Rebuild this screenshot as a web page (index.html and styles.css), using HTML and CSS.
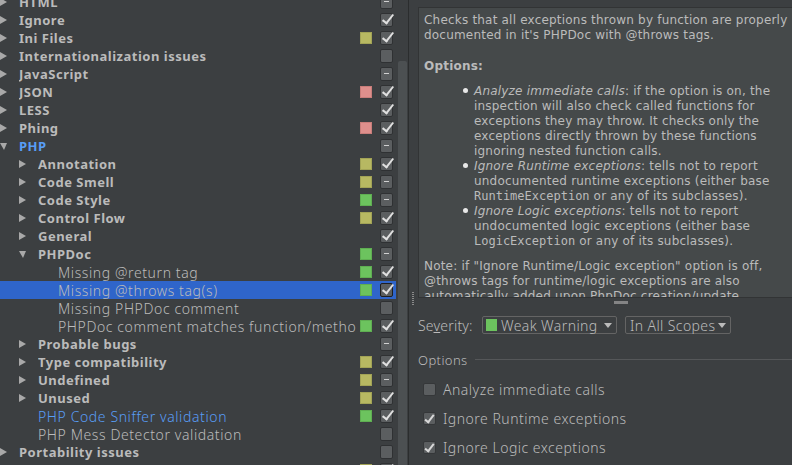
FILE: index.html
```html
<!DOCTYPE html>
<html>
<head>
<meta charset="utf-8">
<link rel="stylesheet" href="styles.css">
</head>
<body>
<div class="app">
  <div class="tree-pane">
    <div class="tree">
      <div class="row l0"><span class="arr right"></span><span class="lbl b">HTML</span><span class="sw"></span><span class="cb minus"></span></div>
      <div class="row l0"><span class="arr right"></span><span class="lbl b">Ignore</span><span class="sw"></span><span class="cb on"></span></div>
      <div class="row l0"><span class="arr right"></span><span class="lbl b">Ini Files</span><span class="sw y"></span><span class="cb on"></span></div>
      <div class="row l0"><span class="arr right"></span><span class="lbl b">Internationalization issues</span><span class="sw"></span><span class="cb"></span></div>
      <div class="row l0"><span class="arr right"></span><span class="lbl b">JavaScript</span><span class="sw"></span><span class="cb minus"></span></div>
      <div class="row l0"><span class="arr right"></span><span class="lbl b">JSON</span><span class="sw r"></span><span class="cb on"></span></div>
      <div class="row l0"><span class="arr right"></span><span class="lbl b">LESS</span><span class="sw"></span><span class="cb on"></span></div>
      <div class="row l0"><span class="arr right"></span><span class="lbl b">Phing</span><span class="sw r"></span><span class="cb on"></span></div>
      <div class="row l0"><span class="arr down"></span><span class="lbl b blue">PHP</span><span class="sw"></span><span class="cb minus"></span></div>
      <div class="row l1"><span class="arr right"></span><span class="lbl b">Annotation</span><span class="sw y"></span><span class="cb on"></span></div>
      <div class="row l1"><span class="arr right"></span><span class="lbl b">Code Smell</span><span class="sw y"></span><span class="cb minus"></span></div>
      <div class="row l1"><span class="arr right"></span><span class="lbl b">Code Style</span><span class="sw g"></span><span class="cb minus"></span></div>
      <div class="row l1"><span class="arr right"></span><span class="lbl b">Control Flow</span><span class="sw y"></span><span class="cb on"></span></div>
      <div class="row l1"><span class="arr right"></span><span class="lbl b">General</span><span class="sw"></span><span class="cb on"></span></div>
      <div class="row l1"><span class="arr down"></span><span class="lbl b">PHPDoc</span><span class="sw g"></span><span class="cb minus"></span></div>
      <div class="row l2"><span class="lbl">Missing @return tag</span><span class="sw g"></span><span class="cb on"></span></div>
      <div class="row l2 sel"><span class="lbl">Missing @throws tag(s)</span><span class="sw g"></span><span class="cb on"></span></div>
      <div class="row l2"><span class="lbl">Missing PHPDoc comment</span><span class="sw"></span><span class="cb"></span></div>
      <div class="row l2"><span class="lbl">PHPDoc comment matches function/method signature</span><span class="sw g"></span><span class="cb on"></span></div>
      <div class="row l1"><span class="arr right"></span><span class="lbl b">Probable bugs</span><span class="sw"></span><span class="cb minus"></span></div>
      <div class="row l1"><span class="arr right"></span><span class="lbl b">Type compatibility</span><span class="sw y"></span><span class="cb on"></span></div>
      <div class="row l1"><span class="arr right"></span><span class="lbl b">Undefined</span><span class="sw y"></span><span class="cb minus"></span></div>
      <div class="row l1"><span class="arr right"></span><span class="lbl b">Unused</span><span class="sw y"></span><span class="cb on"></span></div>
      <div class="row l1 leaf"><span class="lbl blue">PHP Code Sniffer validation</span><span class="sw g"></span><span class="cb on"></span></div>
      <div class="row l1 leaf"><span class="lbl">PHP Mess Detector validation</span><span class="sw"></span><span class="cb"></span></div>
      <div class="row l0"><span class="arr right"></span><span class="lbl b">Portability issues</span><span class="sw"></span><span class="cb"></span></div>
      <div class="row l0"><span class="arr right"></span><span class="lbl b">Properties Files</span><span class="sw y"></span><span class="cb on"></span></div>
    </div>
  </div>
  <div class="scroll"><div class="thumb"></div></div>
  <div class="divider"></div>
  <div class="right-pane">
    <div class="vgrip"></div>
    <div class="desc">
      <p class="p1">Checks that all exceptions thrown by function are properly<br>documented in it's PHPDoc with @throws tags.</p>
      <p class="opt-h">Options:</p>
      <ul class="list">
        <li><i>Analyze immediate calls</i>: if the option is on, the<br>inspection will also check called functions for<br>exceptions they may throw. It checks only the<br>exceptions directly thrown by these functions<br>ignoring nested function calls.</li>
        <li><i>Ignore Runtime exceptions</i>: tells not to report<br>undocumented runtime exceptions (either base<br><span class="mono">RuntimeException</span> or any of its subclasses).</li>
        <li><i>Ignore Logic exceptions</i>: tells not to report<br>undocumented logic exceptions (either base<br><span class="mono">LogicException</span> or any of its subclasses).</li>
      </ul>
      <p class="note">Note: if "Ignore Runtime/Logic exception" option is off,<br>@throws tags for runtime/logic exceptions are also<br>automatically added upon PhpDoc creation/update.</p>
    </div>
    <div class="splitter"><span class="hgrip"></span></div>
    <div class="sev-row">
      <span class="sev-lbl">Se<u>v</u>erity:</span>
      <div class="combo c1"><span class="gsq"></span><span class="ctext">Weak Warning</span><span class="carr"></span></div>
      <div class="combo c2"><span class="ctext">In All Scopes</span><span class="carr"></span></div>
    </div>
    <div class="opts-head"><span>Options</span><span class="line"></span></div>
    <div class="opt"><span class="ocb"></span><span>Analyze immediate calls</span></div>
    <div class="opt"><span class="ocb on"></span><span>Ignore Runtime exceptions</span></div>
    <div class="opt"><span class="ocb on"></span><span>Ignore Logic exceptions</span></div>
  </div>
</div>
</body>
</html>
```
FILE: styles.css
```css
html, body {
  margin: 0;
  padding: 0;
  background: #3c3f41;
}
body {
  width: 792px;
  height: 465px;
  overflow: hidden;
  font-family: "Noto Sans", "DejaVu Sans", sans-serif;
  color: #bbbbbb;
}
.app {
  display: flex;
  height: 465px;
}
.tree-pane {
  width: 396px;
  flex: none;
  overflow: hidden;
}
.tree {
  margin-top: -7px;
}
.row {
  height: 18px;
  display: flex;
  align-items: center;
  padding-right: 3px;
  font-size: 13px;
}
.row.sel {
  background: #2f65ca;
}
.row.l0 { padding-left: 0; }
.row.l1 { padding-left: 19px; }
.row.l1.leaf { padding-left: 38px; }
.row.l2 { padding-left: 58px; }
.arr {
  width: 7px;
  height: 8px;
  flex: none;
  margin-right: 12px;
}
.arr.right::before {
  content: "";
  display: block;
  width: 0;
  height: 0;
  border-top: 4px solid transparent;
  border-bottom: 4px solid transparent;
  border-left: 7px solid #a9a9a9;
}
.arr.down::before {
  content: "";
  display: block;
  width: 0;
  height: 0;
  margin-top: 1px;
  border-left: 4px solid transparent;
  border-right: 3px solid transparent;
  border-top: 7px solid #a9a9a9;
}
.lbl {
  flex: 1;
  min-width: 0;
  white-space: nowrap;
  overflow: hidden;
  font-size: 14px;
  font-weight: 300;
  color: #bbbbbb;
  letter-spacing: 0.6px;
}
.lbl.b {
  font-size: 13px;
  font-weight: 700;
  color: #bbbbbb;
  letter-spacing: 0.5px;
}
.blue, .lbl.blue, .lbl.b.blue {
  color: #589df6;
}
.sw {
  width: 12px;
  height: 12px;
  flex: none;
  margin: 0 8px 0 4px;
  box-sizing: border-box;
}
.sw.y { background: #b7b862; border: 1px solid #a2a356; }
.sw.r { background: #de8f8c; border: 1px solid #c87d7a; }
.sw.g { background: #6cc35e; border: 1px solid #5fae52; }
.cb {
  width: 13px;
  height: 14px;
  flex: none;
  box-sizing: border-box;
  background: #5b5e60;
  border: 1px solid #2f3133;
  border-radius: 2px;
  position: relative;
}
.cb.minus::after {
  content: "";
  position: absolute;
  left: 3px;
  right: 3px;
  top: 5px;
  height: 1px;
  background: #d0d0d0;
}
.cb.on::after {
  content: "";
  position: absolute;
  left: 4px;
  top: -2px;
  width: 4px;
  height: 10px;
  border-right: 2px solid #e0e0e0;
  border-bottom: 2px solid #e0e0e0;
  transform: rotate(38deg);
  transform-origin: 50% 50%;
}
.sel .cb {
  border-color: #1f1f1f;
}
.scroll {
  width: 12px;
  flex: none;
  padding-top: 61px;
  box-sizing: border-box;
}
.thumb {
  width: 9px;
  margin-left: 2px;
  height: 420px;
  background: #4c5052;
  border-radius: 2px 2px 0 0;
}
.divider {
  width: 1px;
  flex: none;
  background: #2b2d2e;
}
.right-pane {
  flex: 1;
  min-width: 0;
  padding-left: 9px;
  position: relative;
  overflow: hidden;
}
.vgrip {
  position: absolute;
  left: 3px;
  top: 292px;
  width: 2px;
  height: 14px;
  background-image: linear-gradient(#8a8a8a 1px, transparent 1px);
  background-size: 2px 2px;
}
.desc {
  margin-top: 7px;
  height: 291px;
  margin-right: -2px;
  box-sizing: border-box;
  border: 1px solid #323435;
  background: #45494a;
  overflow: hidden;
  padding: 5px 0 0 5px;
  font-family: "DejaVu Sans", sans-serif;
  font-size: 12px;
  line-height: 15px;
  letter-spacing: 0.2px;
  color: #bbbbbb;
  white-space: nowrap;
}
.desc p {
  margin: 0;
}
.opt-h {
  margin-top: 16px !important;
  font-weight: bold;
}
.list {
  list-style: none;
  margin: 10px 0 0 0;
  padding: 0 0 0 50px;
}
.list li::before {
  content: "";
  display: inline-block;
  width: 5px;
  height: 5px;
  border-radius: 50%;
  background: #e8e8e8;
  margin-left: -11px;
  margin-right: 6px;
  vertical-align: 2px;
}
.mono {
  font-family: "DejaVu Sans Mono", monospace;
  font-size: 12px;
  letter-spacing: 0;
}
.note {
  margin-top: 10px !important;
}
.splitter {
  height: 18px;
  display: flex;
  padding: 3px 0 0 196px;
  box-sizing: border-box;
}
.hgrip {
  width: 14px;
  height: 3px;
  background-image: radial-gradient(circle, #8a8a8a 0.7px, transparent 0.8px);
  background-size: 2px 2px;
}
.sev-row {
  display: flex;
  align-items: center;
  height: 18px;
  font-size: 14px;
  font-weight: 300;
  letter-spacing: 0.4px;
}
.sev-lbl {
  width: 64px;
  flex: none;
  white-space: nowrap;
  letter-spacing: 0.2px;
}
.combo {
  height: 18px;
  box-sizing: border-box;
  border: 1px solid #646464;
  border-radius: 2px;
  display: flex;
  align-items: center;
  padding: 0 4px 0 3px;
  flex: none;
}
.c1 {
  width: 135px;
}
.c2 {
  width: 106px;
  margin-left: 8px;
  padding-left: 4px;
}
.gsq {
  width: 11px;
  height: 12px;
  background: #6cc35e;
  margin-right: 4px;
  flex: none;
}
.ctext {
  flex: 1;
  white-space: nowrap;
}
.carr {
  width: 0;
  height: 0;
  flex: none;
  border-left: 4px solid transparent;
  border-right: 4px solid transparent;
  border-top: 5px solid #bbbbbb;
}
.opts-head {
  display: flex;
  align-items: center;
  margin-top: 18px;
  height: 16px;
  font-size: 13px;
  font-weight: 300;
  letter-spacing: 0.4px;
}
.opts-head .line {
  flex: 1;
  height: 1px;
  background: #555759;
  margin-left: 7px;
  margin-top: -1px;
}
.opt {
  height: 29px;
  display: flex;
  align-items: center;
  font-size: 14px;
  font-weight: 300;
  letter-spacing: 0.5px;
}
.opts-head + .opt {
  margin-top: 7px;
}
.ocb {
  width: 13px;
  height: 13px;
  box-sizing: border-box;
  margin-left: 5px;
  margin-right: 7px;
  background: #5b5e60;
  border: 1px solid #353739;
  border-radius: 2px;
  position: relative;
}
.ocb.on::after {
  content: "";
  position: absolute;
  left: 3px;
  top: 0px;
  width: 3px;
  height: 8px;
  border-right: 2px solid #d8d8d8;
  border-bottom: 2px solid #d8d8d8;
  transform: rotate(38deg);
}
```
